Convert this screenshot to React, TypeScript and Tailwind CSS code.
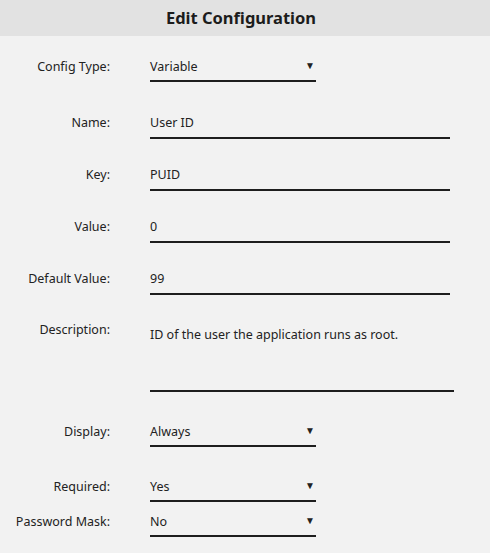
type Row = {
  label: string;
  value: string;
  kind: "select" | "text";
  mt: string;
};

const rows: Row[] = [
  { label: "Config Type:", value: "Variable", kind: "select", mt: "mt-[21px]" },
  { label: "Name:", value: "User ID", kind: "text", mt: "mt-[31px]" },
  { label: "Key:", value: "PUID", kind: "text", mt: "mt-[26px]" },
  { label: "Value:", value: "0", kind: "text", mt: "mt-[26px]" },
  { label: "Default Value:", value: "99", kind: "text", mt: "mt-[26px]" },
];

const selects: Row[] = [
  { label: "Display:", value: "Always", kind: "select", mt: "mt-[30px]" },
  { label: "Required:", value: "Yes", kind: "select", mt: "mt-[30px]" },
  { label: "Password Mask:", value: "No", kind: "select", mt: "mt-[10px]" },
];

function Field({ row }: { row: Row }) {
  return (
    <div className={`flex items-start ${row.mt}`}>
      <div className="w-[110px] shrink-0 text-right leading-[20px]">{row.label}</div>
      {row.kind === "select" ? (
        <div className="ml-[40px] flex w-[166px] items-center justify-between border-b-2 border-[#1e1e1e] pb-[3px] leading-[20px]">
          <span>{row.value}</span>
          <span className="mr-[1px] -translate-y-[2px] text-[10px] leading-[20px]">▼</span>
        </div>
      ) : (
        <div className="ml-[40px] w-[300px] border-b-2 border-[#1e1e1e] pb-[4px] leading-[20px]">
          {row.value}
        </div>
      )}
    </div>
  );
}

export default function App() {
  return (
    <div
      className="h-[553px] w-[490px] bg-[#f2f2f2] text-[12.5px] text-[#222]"
      style={{ fontFamily: '"Noto Sans", sans-serif' }}
    >
      <div className="flex h-[36px] items-center justify-center bg-[#e2e2e2] pr-[8px] text-[16.5px] font-bold text-[#1c1c1c]">
        Edit Configuration
      </div>

      {rows.map((r) => (
        <Field key={r.label} row={r} />
      ))}

      <div className="mt-[25px] flex items-start">
        <div className="w-[110px] shrink-0 text-right leading-[20px]">Description:</div>
        <div className="ml-[40px] h-[72px] w-[304px] border-b-2 border-[#1e1e1e] pt-[5px] leading-[20px]">
          ID of the user the application runs as root.
        </div>
      </div>

      {selects.map((r) => (
        <Field key={r.label} row={r} />
      ))}
    </div>
  );
}
